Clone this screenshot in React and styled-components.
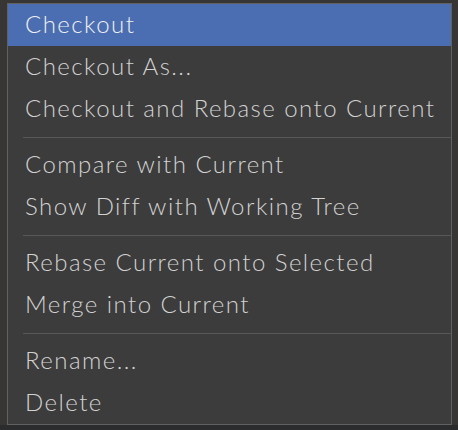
import React from "react";
import styled, { createGlobalStyle } from "styled-components";

const GlobalStyle = createGlobalStyle`
  html, body {
    margin: 0;
    padding: 0;
    background: #383634;
    overflow: hidden;
  }
`;

const Stage = styled.div`
  width: 458px;
  height: 430px;
  padding: 3px 6px 0 7px;
  box-sizing: border-box;
  background: linear-gradient(to bottom, #383634 0, #383634 425px, #2b2c2e 425px);
`;

const Menu = styled.div`
  width: 445px;
  box-sizing: border-box;
  border: 1px solid #616161;
  background: #3c3c3c;
  display: flex;
  flex-direction: column;
  font-family: Lato, "Noto Sans", sans-serif;
  font-weight: 300;
`;

const Item = styled.div`
  height: 42px;
  display: flex;
  align-items: center;
  padding-left: 17px;
  padding-bottom: 3px;
  box-sizing: border-box;
  font-size: 24px;
  letter-spacing: 1.45px;
  color: ${(p) => (p.$active ? "#f0f0f0" : "#d2d2d2")};
  background: ${(p) => (p.$active ? "#4a6eb1" : "transparent")};
`;

const Separator = styled.div`
  height: 14px;
  display: flex;
  align-items: center;
  padding-left: 15px;

  &::after {
    content: "";
    flex: 1;
    height: 1px;
    background: #575757;
  }
`;

const groups = [
  ["Checkout", "Checkout As...", "Checkout and Rebase onto Current"],
  ["Compare with Current", "Show Diff with Working Tree"],
  ["Rebase Current onto Selected", "Merge into Current"],
  ["Rename...", "Delete"],
];

export default function App() {
  return (
    <>
      <GlobalStyle />
      <Stage>
        <Menu>
          {groups.map((group, gi) => (
            <React.Fragment key={gi}>
              {gi > 0 && <Separator />}
              {group.map((label) => (
                <Item key={label} $active={label === "Checkout"}>
                  {label}
                </Item>
              ))}
            </React.Fragment>
          ))}
        </Menu>
      </Stage>
    </>
  );
}
